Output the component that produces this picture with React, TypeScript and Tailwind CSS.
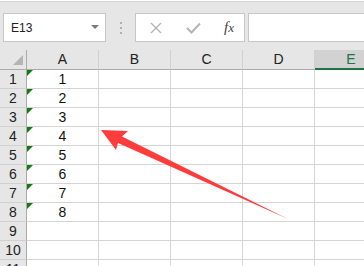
import React from "react";

const cols = ["A", "B", "C", "D", "E"];
const rows = [1, 2, 3, 4, 5, 6, 7, 8, 9, 10, 11];

export default function App() {
  return (
    <div
      className="relative w-[364px] h-[266px] overflow-hidden bg-white"
      style={{ fontFamily: '"Liberation Sans", Arial, sans-serif' }}
    >
      {/* Toolbar */}
      <div className="h-[49px] bg-[#e6e6e6] border-t border-[#d4d4d4] mt-px flex items-start pt-[11px]">
        <div className="shrink-0 ml-[3px] w-[103px] h-[29px] bg-white border border-[#c6c6c6] flex items-center justify-between pl-[7px] pr-[6px]">
          <span className="text-[12px] text-[#222]">E13</span>
          <svg width="8" height="5" viewBox="0 0 8 5">
            <polygon points="0,0 8,0 4,4" fill="#7a7a7a" />
          </svg>
        </div>
        <div className="shrink-0 w-[29px] h-[29px] flex flex-col items-center justify-center gap-[3px]">
          <div className="w-[2px] h-[2px] bg-[#b0b0b0]" />
          <div className="w-[2px] h-[2px] bg-[#b0b0b0]" />
          <div className="w-[2px] h-[2px] bg-[#b0b0b0]" />
        </div>
        <div className="shrink-0 w-[110px] h-[29px] bg-white border border-[#c6c6c6] flex items-center">
          <div className="w-[37px] flex justify-center pl-[2px]">
            <svg width="12" height="12" viewBox="0 0 12 12">
              <path d="M1 1 L11 11 M11 1 L1 11" stroke="#b4b4b4" strokeWidth="1.4" fill="none" />
            </svg>
          </div>
          <div className="w-[37px] flex justify-center pl-[4px]">
            <svg width="15" height="12" viewBox="0 0 15 12">
              <path d="M1 6 L5.5 10.5 L14 1.5" stroke="#b4b4b4" strokeWidth="2" fill="none" />
            </svg>
          </div>
          <div className="flex-1 flex justify-center pl-[4px]">
            <span
              className="italic text-[15px] leading-none text-[#444]"
              style={{ fontFamily: '"Liberation Serif", "Times New Roman", serif' }}
            >
              f<span className="text-[13px]">x</span>
            </span>
          </div>
        </div>
        <div className="ml-[3px] flex-1 h-[29px] bg-white border border-[#c6c6c6] border-r-0" />
      </div>

      {/* Header row */}
      <div className="flex h-[20px] bg-[#e6e6e6]">
        <div className="shrink-0 relative w-[27px] h-full border-r border-b border-[#ababab]">
          <svg className="absolute left-[13px] top-[5px]" width="10" height="10" viewBox="0 0 10 10">
            <polygon points="10,0 10,10 0,10" fill="#b4b4b4" />
          </svg>
        </div>
        {cols.map((c) =>
          c === "E" ? (
            <div
              key={c}
              className="shrink-0 w-[72px] h-full bg-[#d2d2d2] border-b-2 border-[#217346] flex items-center justify-center text-[14px] text-[#217346]"
            >
              {c}
            </div>
          ) : (
            <div
              key={c}
              className="shrink-0 w-[72px] h-full border-r border-b border-r-[#d0d0d0] border-b-[#ababab] flex items-center justify-center text-[14px] text-[#222]"
            >
              {c}
            </div>
          )
        )}
      </div>

      {/* Rows */}
      {rows.map((r) => (
        <div key={r} className="flex h-[19px]">
          <div className="shrink-0 w-[27px] h-full bg-[#e6e6e6] border-r border-b border-r-[#ababab] border-b-[#d0d0d0] flex items-center justify-center text-[14px] text-[#222]">
            {r}
          </div>
          {cols.map((c) => (
            <div
              key={c}
              className="shrink-0 relative w-[72px] h-full border-r border-b border-[#d4d4d4] flex items-center justify-center text-[14px] text-[#111]"
            >
              {c === "A" && r <= 8 ? (
                <>
                  <svg className="absolute left-0 top-0" width="6" height="6" viewBox="0 0 6 6">
                    <polygon points="0,0 6,0 0,6" fill="#107c10" />
                  </svg>
                  {r}
                </>
              ) : null}
            </div>
          ))}
        </div>
      ))}

      {/* Arrow annotation */}
      <svg className="absolute left-0 top-0 pointer-events-none" width="364" height="266" viewBox="0 0 364 266">
        <polygon
          points="101,130 128,131 122,136.5 288,219 118,143 116,150"
          fill="#ff3c3c"
        />
      </svg>
    </div>
  );
}
